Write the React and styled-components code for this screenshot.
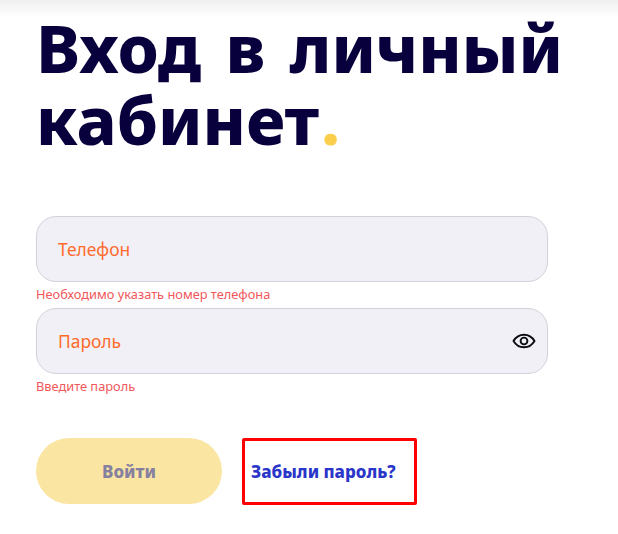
import React from "react";
import styled, { createGlobalStyle } from "styled-components";

const Global = createGlobalStyle`
  html, body { margin: 0; padding: 0; background: #fff; overflow: hidden; }
  body { font-family: "Noto Sans", "Open Sans", sans-serif; }
`;

const Page = styled.div`
  position: relative;
  width: 618px;
  height: 534px;
  padding: 11px 0 0 36px;
  box-sizing: border-box;
`;

const TopShade = styled.div`
  position: absolute;
  top: 0;
  left: 0;
  right: 0;
  height: 17px;
  background: linear-gradient(to bottom, #efefef, #ffffff);
`;

const Title = styled.h1`
  position: relative;
  margin: 0 0 61px;
  font-size: 66px;
  line-height: 72px;
  font-weight: 800;
  color: #08003c;
  word-spacing: 7px;
  width: 560px;
`;

const Dot = styled.span`
  margin-left: 2px;
  color: #fbce4b;
`;

const Form = styled.form`
  display: flex;
  flex-direction: column;
  width: 512px;
`;

const Field = styled.div`
  display: flex;
  align-items: center;
  justify-content: space-between;
  height: 66px;
  box-sizing: border-box;
  padding: 0 11px 0 21px;
  background: #f1f0f6;
  border: 1px solid #d3d2dc;
  border-radius: 20px;
  font-size: 17.4px;
  color: #ff6b2c;
`;

const ErrorText = styled.div`
  height: 26px;
  padding-top: 4px;
  box-sizing: border-box;
  font-size: 12.8px;
  line-height: 16px;
  color: #f2575b;
`;

const Actions = styled.div`
  display: flex;
  align-items: flex-start;
  gap: 20px;
  margin-top: 38px;
`;

const SubmitButton = styled.button`
  width: 186px;
  height: 66px;
  border: none;
  border-radius: 33px;
  background: #fbe5a3;
  color: #85809f;
  font-family: inherit;
  font-size: 17px;
  font-weight: 800;
`;

const ForgotLink = styled.a`
  display: flex;
  align-items: center;
  box-sizing: border-box;
  width: 175px;
  height: 67px;
  padding-left: 6px;
  border: 3px solid #ff0000;
  border-radius: 2px;
  color: #2a35c9;
  font-size: 17px;
  font-weight: 800;
  white-space: nowrap;
  text-decoration: none;
`;

const EyeIcon = () => (
  <svg width="24" height="24" viewBox="0 0 24 24" fill="none" stroke="#0b0b14" strokeWidth="1.9">
    <path d="M1.5 12C4 7.8 7.6 5.7 12 5.7S20 7.8 22.5 12C20 16.2 16.4 18.3 12 18.3S4 16.2 1.5 12Z" />
    <circle cx="12" cy="12" r="3.4" />
  </svg>
);

export default function App() {
  return (
    <Page>
      <Global />
      <TopShade />
      <Title>
        Вход в личный кабинет<Dot>.</Dot>
      </Title>
      <Form>
        <Field>Телефон</Field>
        <ErrorText>Необходимо указать номер телефона</ErrorText>
        <Field>
          Пароль
          <EyeIcon />
        </Field>
        <ErrorText>Введите пароль</ErrorText>
        <Actions>
          <SubmitButton type="button">Войти</SubmitButton>
          <ForgotLink href="#">Забыли пароль?</ForgotLink>
        </Actions>
      </Form>
    </Page>
  );
}
